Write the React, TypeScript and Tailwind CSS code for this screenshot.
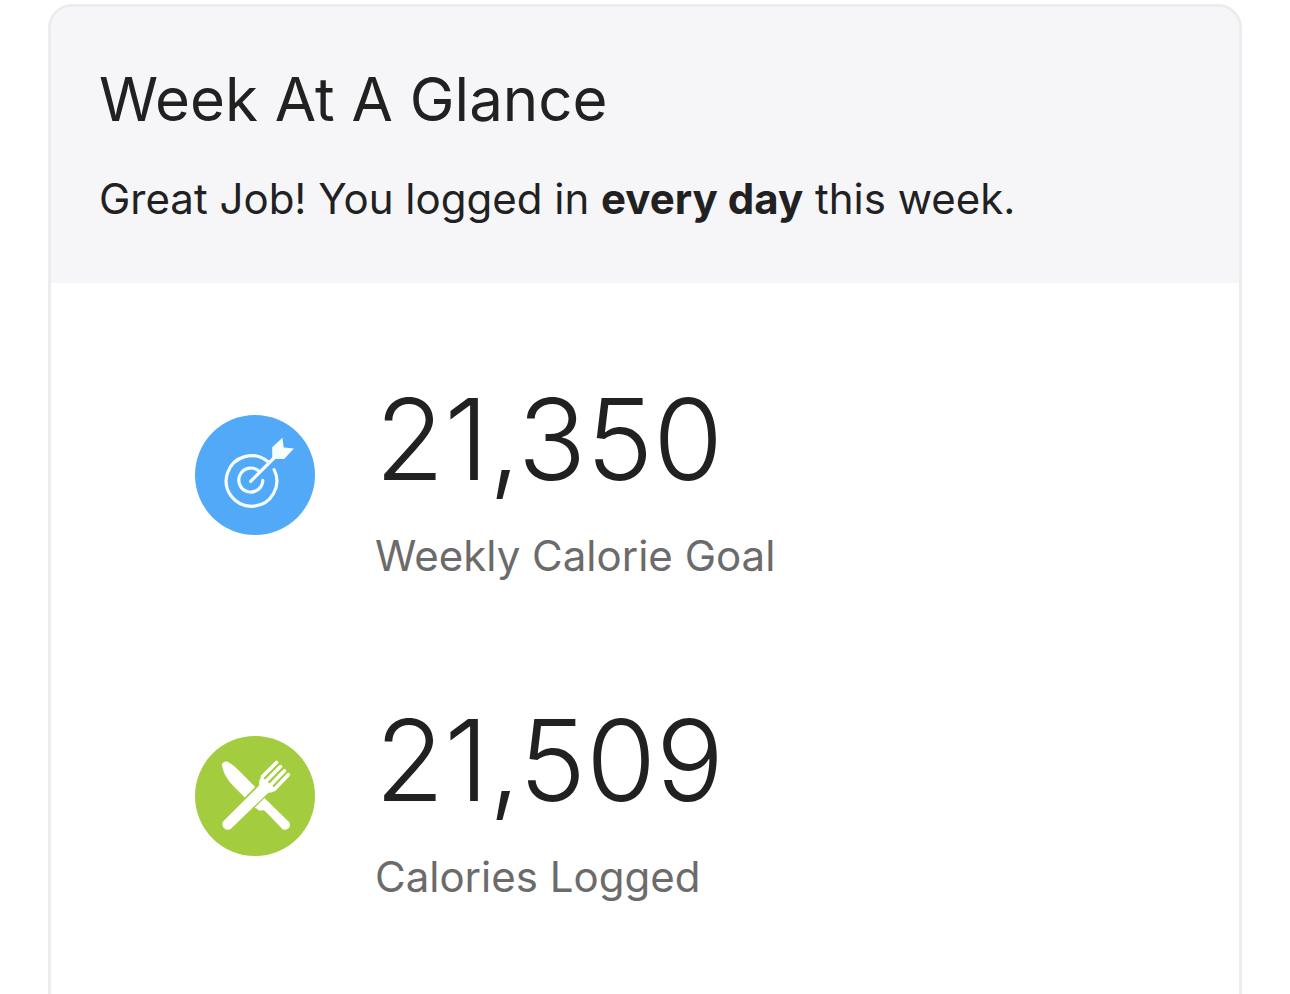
import React from "react";

type Stat = { value: string; label: string; color: string; icon: React.ReactNode };

function TargetIcon() {
  return (
    <svg viewBox="0 0 120 120" className="size-full" fill="none" stroke="#f6feff" strokeWidth="3.200" strokeLinecap="round" aria-hidden="true">
      <path d="M73 46.800A25.300 25.300 0 1 0 79.100 54.600" />
      <path d="M63.200 55.600A12 12 0 1 0 67.800 65.300" />
      <path d="M55.700 66.300L80 42" />
      <path d="M77.200 43.900V32.200L87.500 22.700L88.700 32.400L98.900 33.600L89.200 43.900Z" fill="#f6feff" stroke="none" />
    </svg>
  );
}

function CutleryIcon() {
  return (
    <svg viewBox="0 0 120 120" className="size-full" fill="white" aria-hidden="true">
      <path d="M27.100 29.500C26.800 26.300 30 24.800 33 26C38 28.800 42 32.600 45.600 36.200L60.200 51L49.800 61.500L38 49.800C32.500 44 28.200 37 27.100 29.500Z" />
      <path d="M59.700 71.700L69.500 61.900L94 86C97.200 90.200 92.200 95.600 87.600 93.200L70.500 75.500C68 73 66.500 75 64.500 74.500C62.500 74 62 72 59.700 71.700Z" />
      <path d="M28.300 85.300L63.200 50.500C65.500 48.500 62.500 46 66.500 40.500L81.500 53.500C77 58 74.500 55.500 72.300 57.700L35.700 93C31 96 25 90 28.300 85.300Z" />
      <path d="M67.500 40.500L81.500 26.500M71.700 44.600L85.500 30.600M75.900 48.700L89.400 34.700M80 52.700L93.300 38.700" fill="none" stroke="white" strokeWidth="3.600" strokeLinecap="round" />
    </svg>
  );
}

const stats: Stat[] = [
  { value: "21,350", label: "Weekly Calorie Goal", color: "bg-[#52a9f8]", icon: <TargetIcon /> },
  { value: "21,509", label: "Calories Logged", color: "bg-[#a3cc3e]", icon: <CutleryIcon /> },
];

export default function App() {
  return (
    <main className="h-screen overflow-hidden bg-white px-12 pt-1 font-['Inter',sans-serif] text-[#212122]">
      <section className="min-h-[1100px] overflow-hidden rounded-[24px] border-3 border-[#ececef]">
        <header className="bg-[#f6f6f9] px-12 pt-[54px] pb-14">
          <h1 className="text-[60px] leading-[76px]">Week At A Glance</h1>
          <p className="mt-[34px] text-[42px] leading-[56px]">
            Great Job! You logged in <strong className="font-bold">every day</strong> this week.
          </p>
        </header>
        <ul className="px-36 pt-24">
          {stats.map((s) => (
            <li key={s.label} className="flex h-[321px] items-start gap-[60px]">
              <div className={`mt-9 size-[120px] shrink-0 rounded-full ${s.color}`}>{s.icon}</div>
              <div>
                <p className="text-[113px] leading-[120px] font-light">{s.value}</p>
                <p className="mt-[29px] text-[42px] leading-[56px] text-[#6b6b6c]">{s.label}</p>
              </div>
            </li>
          ))}
        </ul>
      </section>
    </main>
  );
}
